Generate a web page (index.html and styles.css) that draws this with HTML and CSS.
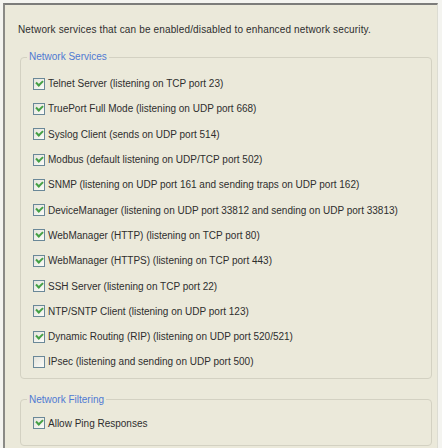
FILE: index.html
```html
<!DOCTYPE html>
<html>
<head>
<meta charset="utf-8">
<link rel="stylesheet" href="styles.css">
</head>
<body>
<div class="frame">
  <p class="intro">Network services that can be enabled/disabled to enhanced network security.</p>
  <fieldset class="group">
    <legend>Network Services</legend>
    <div class="rows">
      <label class="row"><span class="cb on"></span>Telnet Server (listening on TCP port 23)</label>
      <label class="row"><span class="cb on"></span>TruePort Full Mode (listening on UDP port 668)</label>
      <label class="row"><span class="cb on"></span>Syslog Client (sends on UDP port 514)</label>
      <label class="row"><span class="cb on"></span>Modbus (default listening on UDP/TCP port 502)</label>
      <label class="row"><span class="cb on"></span>SNMP (listening on UDP port 161 and sending traps on UDP port 162)</label>
      <label class="row"><span class="cb on"></span>DeviceManager (listening on UDP port 33812 and sending on UDP port 33813)</label>
      <label class="row"><span class="cb on"></span>WebManager (HTTP) (listening on TCP port 80)</label>
      <label class="row"><span class="cb on"></span>WebManager (HTTPS) (listening on TCP port 443)</label>
      <label class="row"><span class="cb on"></span>SSH Server (listening on TCP port 22)</label>
      <label class="row"><span class="cb on"></span>NTP/SNTP Client (listening on UDP port 123)</label>
      <label class="row"><span class="cb on"></span>Dynamic Routing (RIP) (listening on UDP port 520/521)</label>
      <label class="row"><span class="cb"></span>IPsec (listening and sending on UDP port 500)</label>
    </div>
  </fieldset>
  <fieldset class="group group2">
    <legend>Network Filtering</legend>
    <div class="rows">
      <label class="row"><span class="cb on"></span>Allow Ping Responses</label>
    </div>
  </fieldset>
</div>
</body>
</html>
```

FILE: styles.css
```css
html, body {
  margin: 0;
  padding: 0;
  background: #f4f4f0;
}
body {
  font-family: "Liberation Sans", Arial, sans-serif;
  font-size: 10px;
  color: #2e2e2e;
}
.frame {
  margin: 3px 4px 0 3px;
  height: 445px;
  box-sizing: border-box;
  border-top: 2px solid #7c7c7a;
  border-left: 2px solid #8a8a86;
  border-right: 1px solid #dcdcd2;
  background: #ebe9da;
  padding: 18px 5px 0 15px;
}
.intro {
  margin: 0 0 0 -2px;
  line-height: 14px;
  height: 14px;
  letter-spacing: 0.15px;
}
.group {
  margin: 13px 0 0 0;
  border: 1px solid #d3d1c2;
  border-radius: 4px;
  padding: 0 10px 3px 12px;
}
.group legend {
  color: #5079d2;
  padding: 0 2px;
  margin-left: -6px;
  line-height: 14px;
}
.group2 {
  margin-top: 14px;
  padding-bottom: 9px;
}
.rows {
  display: flex;
  flex-direction: column;
  padding-top: 7px;
}
.row {
  display: flex;
  align-items: center;
  height: 25.3px;
  white-space: nowrap;
}
.group2 .rows {
  padding-top: 4px;
}
.cb {
  width: 10px;
  height: 10px;
  border: 1px solid #6a8898;
  background: linear-gradient(135deg, #e4e4dc, #fbfbf8);
  margin-right: 3px;
  flex: none;
  position: relative;
}
.cb.on::after {
  content: "";
  position: absolute;
  left: 2px;
  top: 1px;
  width: 5px;
  height: 3px;
  border-left: 2px solid #45a045;
  border-bottom: 2px solid #45a045;
  transform: rotate(-45deg);
  transform-origin: center;
}
```
